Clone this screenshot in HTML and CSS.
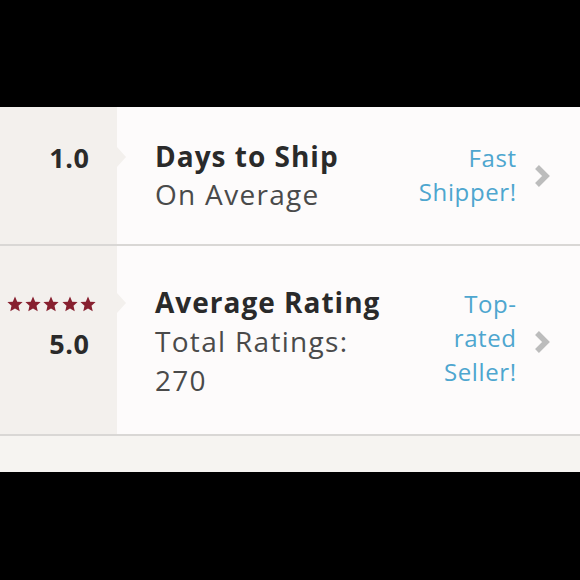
FILE: index.html
```html
<!DOCTYPE html>
<html>
<head>
<meta charset="utf-8">
<link rel="stylesheet" href="styles.css">
</head>
<body>
<div class="screen">
  <div class="panel">
    <div class="row row-ship">
      <div class="inner">
        <div class="stat">
          <div class="num">1.0</div>
        </div>
        <div class="main">
          <div class="title">Days to Ship</div>
          <div class="sub">On Average</div>
        </div>
        <div class="badge">Fast<br>Shipper!</div>
        <svg class="chev" viewBox="0 0 16 24" width="16" height="24"><polyline points="3,3 12,12 3,21" fill="none" stroke="#bcbcbc" stroke-width="5.5"/></svg>
      </div>
    </div>
    <div class="row row-rating">
      <div class="inner">
        <div class="stat">
          <div class="stars">
            <svg viewBox="1.5 1.5 21 21" width="16" height="16"><path d="M12 2l2.9 6.9 7.1.6-5.4 4.7 1.6 7.3L12 17.8 5.8 21.5l1.6-7.3L2 9.5l7.1-.6z"/></svg>
            <svg viewBox="1.5 1.5 21 21" width="16" height="16"><path d="M12 2l2.9 6.9 7.1.6-5.4 4.7 1.6 7.3L12 17.8 5.8 21.5l1.6-7.3L2 9.5l7.1-.6z"/></svg>
            <svg viewBox="1.5 1.5 21 21" width="16" height="16"><path d="M12 2l2.9 6.9 7.1.6-5.4 4.7 1.6 7.3L12 17.8 5.8 21.5l1.6-7.3L2 9.5l7.1-.6z"/></svg>
            <svg viewBox="1.5 1.5 21 21" width="16" height="16"><path d="M12 2l2.9 6.9 7.1.6-5.4 4.7 1.6 7.3L12 17.8 5.8 21.5l1.6-7.3L2 9.5l7.1-.6z"/></svg>
            <svg viewBox="1.5 1.5 21 21" width="16" height="16"><path d="M12 2l2.9 6.9 7.1.6-5.4 4.7 1.6 7.3L12 17.8 5.8 21.5l1.6-7.3L2 9.5l7.1-.6z"/></svg>
          </div>
          <div class="num">5.0</div>
        </div>
        <div class="main">
          <div class="title">Average Rating</div>
          <div class="sub">Total Ratings:<br>270</div>
        </div>
        <div class="badge">Top-<br>rated<br>Seller!</div>
        <svg class="chev" viewBox="0 0 16 24" width="16" height="24"><polyline points="3,3 12,12 3,21" fill="none" stroke="#bcbcbc" stroke-width="5.5"/></svg>
      </div>
    </div>
    <div class="foot"></div>
  </div>
</div>
</body>
</html>
```
FILE: styles.css
```css
html, body {
  margin: 0;
  padding: 0;
  background: #000;
}
.screen {
  width: 580px;
  height: 580px;
  padding-top: 107px;
  box-sizing: border-box;
  font-family: "Open Sans", Lato, sans-serif;
}
.panel {
  background: #fdfbfb;
}
.row {
  display: flex;
  align-items: center;
  background: linear-gradient(to right, #f3f0ed 0, #f3f0ed 117px, #fdfbfb 117px);
  border-bottom: 2px solid #d9d7d5;
}
.row-ship { height: 137px; }
.row-rating { height: 188px; }
.row-rating .inner { padding-top: 4px; }
.inner {
  display: flex;
  align-items: flex-start;
  width: 100%;
}
.stat {
  position: relative;
  width: 117px;
  box-sizing: border-box;
  padding-right: 28px;
  display: flex;
  flex-direction: column;
  align-items: flex-end;
}
.stat::after {
  content: "";
  position: absolute;
  right: -9px;
  top: 8px;
  border-left: 9px solid #f3f0ed;
  border-top: 10px solid transparent;
  border-bottom: 10px solid transparent;
}
.num {
  font-weight: 700;
  font-size: 27px;
  line-height: 38px;
  letter-spacing: 0.6px;
  margin-right: -0.6px;
  color: #2a2a2a;
}
.row-rating .num,
.row-rating .main { line-height: 39px; }
.stars {
  display: flex;
  gap: 2.3px;
  height: 39px;
  align-items: center;
  margin-right: -7px;
  fill: #87202f;
}
.main {
  flex: 1;
  padding-left: 38px;
  font-size: 28px;
  line-height: 38px;
  margin-top: -2px;
}
.title {
  font-weight: 700;
  letter-spacing: 1px;
  color: #2a2a2a;
}
.sub {
  letter-spacing: 1.3px;
  color: #4a4a4a;
}
.badge {
  text-align: right;
  font-size: 24px;
  line-height: 34px;
  letter-spacing: 0.6px;
  margin-right: -0.6px;
  color: #4ea6cf;
  padding-top: 2px;
}
.chev {
  align-self: center;
  margin: 0 30px 0 18px;
}
.foot {
  height: 36px;
  background: #f6f4f1;
}
```
